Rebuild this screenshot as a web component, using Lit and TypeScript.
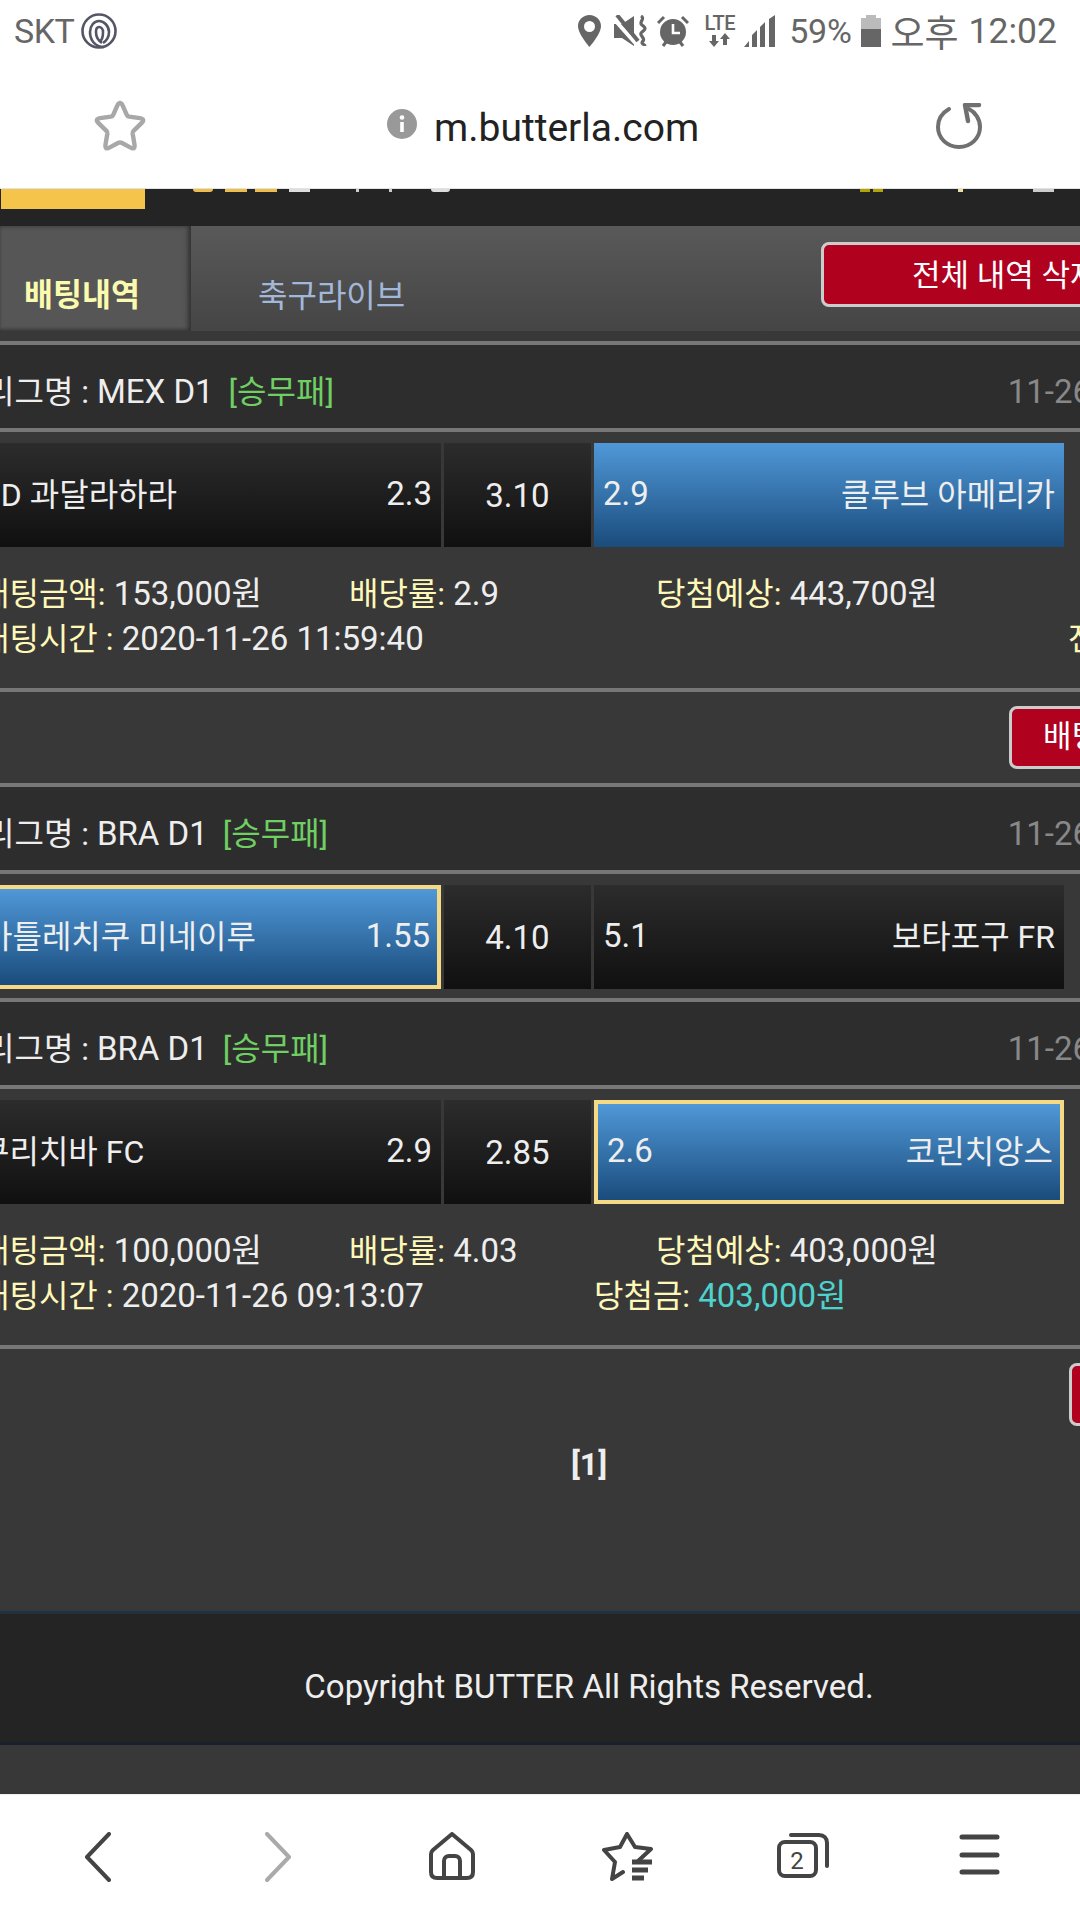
import { LitElement, html, css, svg } from "lit";
import { customElement } from "lit/decorators.js";

interface Cell { left?: string; right?: string; on?: boolean; sel?: boolean; }
interface Section {
  league: string;
  cells: [Cell, Cell, Cell];
  info?: { amount: string; rate: string; expect: string; time: string; win?: string; };
  btnGap?: number;
}

const sections: Section[] = [
  {
    league: "MEX D1",
    cells: [{ left: "CD 과달라하라", right: "2.3" }, { left: "3.10" }, { left: "2.9", right: "클루브 아메리카", on: true }],
    info: { amount: "153,000원", rate: "2.9", expect: "443,700원", time: "2020-11-26 11:59:40" },
    btnGap: 1049,
  },
  {
    league: "BRA D1",
    cells: [{ left: "아틀레치쿠 미네이루", right: "1.55", on: true, sel: true }, { left: "4.10" }, { left: "5.1", right: "보타포구 FR" }],
  },
  {
    league: "BRA D1",
    cells: [{ left: "쿠리치바 FC", right: "2.9" }, { left: "2.85" }, { left: "2.6", right: "코린치앙스", on: true, sel: true }],
    info: { amount: "100,000원", rate: "4.03", expect: "403,000원", time: "2020-11-26 09:13:07", win: "403,000원" },
    btnGap: 1109,
  },
];

const frags = [
  { x: 193, w: 20, c: "#eebd4a", r: 1 }, { x: 225, w: 22, c: "#eebd4a" }, { x: 255, w: 22, c: "#eebd4a" },
  { x: 289, w: 21, c: "#ddd" }, { x: 356, w: 3, c: "#ccc" }, { x: 389, w: 3, c: "#ccc" }, { x: 431, w: 19, c: "#ddd", r: 1 },
  { x: 860, w: 10, c: "#b5a400" }, { x: 873, w: 10, c: "#b5a400" }, { x: 958, w: 5, c: "#eee0a0" }, { x: 1033, w: 21, c: "#ccc" },
];

const icon = (w: number, h: number, body: unknown) =>
  html`<svg width=${w} height=${h} viewBox="0 0 ${w} ${h}" fill="none">${body}</svg>`;

const isNum = (t?: string) => !!t && /^[\d.]+$/.test(t);

@customElement("app-root")
export class AppRoot extends LitElement {
  static styles = css`
    :host {
      display: flex; flex-direction: column; width: 1080px; height: 1920px; overflow: hidden;
      background: #383838; font-family: Roboto, "Noto Sans CJK KR", sans-serif; color: #eee; font-size: 32px;
    }
    .chrome { flex: none; height: 188px; background: #fff; display: flex; flex-direction: column; border-bottom: 1px solid #dde3e6; }
    .status { height: 62px; flex: none; display: flex; align-items: center; color: #666; font-size: 34px; padding-left: 14px; }
    .status svg { flex: none; display: block; }
    .skt { letter-spacing: -.5px; margin-right: 6px; }
    .right { margin-left: auto; display: flex; align-items: center; padding-right: 23px; }
    .lte { display: flex; flex-direction: column; align-items: center; font-size: 20px; line-height: 18px; font-weight: 500; letter-spacing: -.5px; width: 33px; margin-left: 14px; }
    .pct { margin-left: 13px; letter-spacing: -.3px; }
    .ampm { margin-left: 10px; font-size: 37px; line-height: 40px; margin-top: 7px; }
    .clock { margin-left: 10px; font-size: 35.5px; }
    .addr { flex: 1; display: flex; align-items: center; padding-top: 6px; }
    .star { margin-left: 95px; display: block; margin-top: -4px; }
    .star svg { overflow: visible; display: block; }
    .i { margin-left: 242px; display: block; }
    .url { margin-left: 17px; font-size: 39px; color: #222; line-height: 44px; }
    .reload { margin-left: 237px; display: block; margin-top: 4px; }

    .top { flex: none; height: 37px; background: #242424; display: flex; align-items: flex-start; overflow: hidden; padding-left: 1px; }
    .logo { flex: none; width: 144px; height: 20px; background: #f4c44b; }
    .frag { position: absolute; top: 189px; height: 3px; }

    .tabs { flex: none; height: 105px; display: flex; background: linear-gradient(#595959, #454545); }
    .tab { flex: none; height: 100%; box-sizing: border-box; padding-top: 50px; line-height: 40px; font-size: 32px; }
    .tab.on { width: 191px; padding-left: 24px; color: #fbfbb0; font-weight: 700; font-size: 31.5px; background: #565656; box-shadow: inset -3px 0 4px #333, inset 0 -2px 3px #444; }
    .tab.off { width: 630px; padding-left: 67px; color: #a3b8d8; }
    .del {
      flex: none; box-sizing: border-box; height: 63px; border: 3px solid #ccc; border-radius: 8px; background: #b0021f;
      color: #fff; font-size: 31px; line-height: 56px; white-space: nowrap;
    }
    .tabs .del { width: 372px; height: 65px; margin-top: 16px; padding-left: 88px; line-height: 62px; }

    .shift { flex: none; width: 1258px; margin-left: -40px; padding-top: 10px; }
    .league {
      height: 83px; box-sizing: content-box; background: #2d2d2d; border-top: 4px solid #777; border-bottom: 4px solid #777;
      display: flex; align-items: center; padding-left: 25px; padding-top: 0; font-size: 32px; line-height: 40px;
    }
    .league > span { position: relative; top: 5px; }
    .num { font-size: 33px; }
    .kind { color: #6fcf62; margin-left: 15px; }
    .date { color: #888; margin-left: auto; margin-right: 127px; font-size: 33px; }
    .bets { display: grid; grid-template-columns: 481px 147px 470px; gap: 3px; padding-top: 11px; height: 104px; }
    .cell {
      box-sizing: border-box; height: 104px; display: flex; justify-content: space-between; align-items: center;
      background: linear-gradient(#2c2c2c, #101010); padding: 0 9px 4px 9px; white-space: nowrap; font-size: 32px;
    }
    .cell:first-child { padding-left: 20px; }
    .cell.mid { justify-content: center; padding: 0; }
    .cell.on { background: linear-gradient(#5098d8, #1a4c7c); }
    .cell.sel { border: 4px solid #f6d984; padding-left: 9px; padding-right: 7px; }
    .cell:first-child.sel { padding-left: 19px; padding-right: 7px; }
    .name { margin-bottom: 3px; }
    .info { padding: 25px 0 27px 20px; line-height: 44.5px; font-size: 33px; white-space: nowrap; }
    .row { display: flex; }
    .lab { color: #fff8b8; font-size: 32px; }
    .c1 { width: 369px; flex: none; }
    .c2 { width: 307px; flex: none; }
    .c1b { width: 614px; flex: none; }
    .c2b { width: 474px; flex: none; }
    .win { color: #4ed2cd; }
    .rule { height: 4px; background: #777; }
    .gap { height: 9px; }
    .btnrow { height: 91px; box-sizing: border-box; padding-top: 14px; display: flex; }
    .btnrow .del { width: 300px; padding-left: 31px; }
    .pager { height: 171px; display: flex; justify-content: center; align-items: flex-start; padding-top: 3px; box-sizing: border-box; line-height: 42px; font-weight: 700; font-size: 32px; }
    .foot {
      box-sizing: border-box; height: 134px; padding-top: 17px; background: #242424; border-top: 3px solid #1f3040; border-bottom: 3px solid #18212a;
      display: flex; justify-content: center; align-items: center; font-size: 33px; color: #eee;
    }
    .nav { flex: none; margin-top: auto; height: 126px; box-sizing: border-box; background: #fff; border-top: 1px solid #eee; display: flex; align-items: flex-start; padding-top: 37px; }
    .nav svg { flex: none; display: block; }
    .sp { display: block; flex: none; }
  `;

  private renderCell(c: Cell, i: number) {
    const cls = ["cell", i === 1 ? "mid" : "", c.on ? "on" : "", c.sel ? "sel" : ""].join(" ");
    return html`<div class=${cls}>
      <span class=${isNum(c.left) ? "num" : "name"}>${c.left}</span>
      ${c.right ? html`<span class=${isNum(c.right) ? "num" : "name"}>${c.right}</span>` : ""}
    </div>`;
  }

  private renderSection(s: Section) {
    return html`
      <div class="league">
        <span>리그명 : <span class="num">${s.league}</span></span><span class="kind">[승무패]</span><span class="date">11-26</span>
      </div>
      <div class="bets">${s.cells.map((c, i) => this.renderCell(c, i))}</div>
      ${s.info
        ? html`<div class="info">
              <div class="row">
                <span class="c1"><span class="lab">배팅금액:</span> ${s.info.amount}</span>
                <span class="c2"><span class="lab">배당률:</span> ${s.info.rate}</span>
                <span><span class="lab">당첨예상:</span> ${s.info.expect}</span>
              </div>
              <div class="row">
                <span class="c1b"><span class="lab">배팅시간 :</span> ${s.info.time}</span>
                <span class="c2b">${s.info.win ? html`<span class="lab">당첨금:</span> <span class="win">${s.info.win}</span>` : ""}</span>
                ${s.info.win ? "" : html`<span class="lab">전</span>`}
              </div>
            </div>
            <div class="rule"></div>
            <div class="btnrow" style="padding-left:${s.btnGap}px"><div class="del">배팅내역 삭제</div></div>`
        : html`<div class="gap"></div>`}
    `;
  }

  render() {
    return html`
      <div class="chrome">
        <div class="status">
          <span class="skt">SKT</span>
          ${icon(38, 38, svg`<g stroke="#555566" stroke-width="2.6"><circle cx="19" cy="19" r="16.5"/><path d="M24 35c-9 0-14-7-14-15 0-6 4-11 9-11s10 5 10 11c0 6-3 9-6 11"/><path d="M22 31c-3-2-6-6-6-11 0-3 1-5 3-5s4 2 4 5c0 5-1 8-3 9"/></g>`)}
          <div class="right">
            ${icon(23, 32, svg`<path fill-rule="evenodd" fill="#666" d="M11.5 0C5 0 0 5 0 11c0 8 11.5 21 11.5 21S23 19 23 11C23 5 18 0 11.5 0zm0 6a5.5 5.5 0 1 1 0 11 5.5 5.5 0 0 1 0-11z"/>`)}
            <span class="sp" style="width:13px"></span>
            ${icon(33, 32, svg`<path fill="#666" d="M0 9h8l12-8v30L8 23H0z"/><path stroke="#fff" stroke-width="4" d="M-1 3l25 28"/><path stroke="#666" stroke-width="4" d="M3 0l21 26"/><path stroke="#666" stroke-width="3.2" d="M27 1c5 3-3 6 1 9s4 4 0 7 4 6 1 9 2 3 2 5"/>`)}
            <span class="sp" style="width:10px"></span>
            ${icon(32, 32, svg`<circle cx="16" cy="17" r="13" fill="#666"/><path stroke="#fff" stroke-width="2.6" d="M16 9v9h7"/><path stroke="#666" stroke-width="3" d="M1 8l6-6M31 8l-6-6M6 31l3-4M26 31l-3-4"/>`)}
            <div class="lte">LTE
              ${icon(26, 16, svg`<path fill="#666" d="M7 15l-5-6h3V3h4v6h3zM18 1l5 6h-3v6h-4V7h-3z"/>`)}
            </div>
            <span class="sp" style="width:8px"></span>
            ${icon(32, 32, svg`<path fill="#666" d="M0 32l5-6v6zM8 32V20l5-5v17zM16 32V12l5-5v25zM25 32V4l6-4v32z"/>`)}
            <span class="pct">59%</span>
            <span class="sp" style="width:9px"></span>
            ${icon(20, 32, svg`<path fill="#bbb" d="M0 3h5V0h10v3h5v13H0z"/><rect y="14" width="20" height="18" fill="#666"/>`)}
            <span class="ampm">오후</span>
            <span class="clock">12:02</span>
          </div>
        </div>
        <div class="addr">
          <span class="star">${icon(50, 48, svg`<path transform="translate(25 25) scale(1.13) translate(-25 -25)" stroke="#a8a8a8" stroke-width="3.9" stroke-linejoin="round" d="M22.6 6Q25 1.6 27.4 6L31 14.2Q31.6 15.6 33 15.8L42.6 17.2Q47.6 18 44 21.6L37 28.4Q36 29.4 36.2 30.8L37.8 40.4Q38.6 45.6 34 43L26.4 39Q25 38.3 23.6 39L16 43Q11.4 45.6 12.2 40.4L13.8 30.8Q14 29.4 13 28.4L6 21.6Q2.4 18 7.4 17.2L17 15.8Q18.4 15.6 19 14.2Z"/>`)}</span>
          <span class="i">${icon(30, 30, svg`<circle cx="15" cy="15" r="15" fill="#999"/><circle cx="15" cy="8.5" r="2.3" fill="#fff"/><path stroke="#fff" stroke-width="3.6" d="M15 13v10"/>`)}</span>
          <span class="url">m.butterla.com</span>
          <span class="reload">${icon(46, 46, svg`<path stroke="#707070" stroke-width="4" stroke-linecap="round" d="M13 6C6 10 2 16 2 24c0 11 9 20 21 20s21-9 21-20c0-8-5-15-11-18"/><path stroke="#707070" stroke-width="4.4" stroke-linecap="round" stroke-linejoin="round" d="M43 2H29l3 16"/>`)}</span>
        </div>
      </div>
      <div class="top">
        <div class="logo"></div>
        ${frags.map((f) => html`<div class="frag" style="left:${f.x}px;width:${f.w}px;background:${f.c};border-radius:${f.r ? "0 0 10px 10px" : "0"}"></div>`)}
      </div>
      <div class="tabs">
        <div class="tab on">배팅내역</div>
        <div class="tab off">축구라이브</div>
        <div class="del">전체 내역 삭제</div>
      </div>
      <div class="shift">
        ${sections.map((s) => this.renderSection(s))}
        <div class="pager">[1]</div>
        <div class="foot">Copyright BUTTER All Rights Reserved.</div>
      </div>
      <div class="nav">
        <span class="sp" style="width:85px"></span>
        ${icon(26, 50, svg`<path stroke="#444" stroke-width="4" stroke-linecap="round" stroke-linejoin="round" d="M24 2L2 25l22 23"/>`)}
        <span class="sp" style="width:154px"></span>
        ${icon(26, 50, svg`<path stroke="#aaa" stroke-width="4" stroke-linecap="round" stroke-linejoin="round" d="M2 2l22 23L2 48"/>`)}
        <span class="sp" style="width:138px"></span>
        ${icon(46, 48, svg`<path stroke="#444" stroke-width="4" stroke-linejoin="round" d="M23 2L4 18c-1 1-2 2-2 4v18c0 4 2 6 6 6h30c4 0 6-2 6-6V22c0-2-1-3-2-4z"/><path stroke="#444" stroke-width="4" stroke-linejoin="round" d="M15 46V29c0-3 2-5 5-5h6c3 0 5 2 5 5v17"/>`)}
        <span class="sp" style="width:127px"></span>
        ${icon(52, 50, svg`<path stroke="#444" stroke-width="4" stroke-linejoin="round" stroke-linecap="round" d="M35 30l14-13-16-2-8-13-7 13-16 3 11 12-3 17 11-7"/><path stroke="#444" stroke-width="5" d="M30 30h20M30 38h16M30 46h12"/>`)}
        <span class="sp" style="width:123px"></span>
        ${icon(52, 46, svg`<rect x="2" y="10" width="37" height="34" rx="6" stroke="#444" stroke-width="4"/><path stroke="#444" stroke-width="4" stroke-linecap="round" d="M14 3h28c5 0 8 3 8 8v23"/><text x="20" y="37" text-anchor="middle" font-size="24" fill="#444" font-family="Roboto">2</text>`)}
        <span class="sp" style="width:130px"></span>
        ${icon(41, 44, svg`<path stroke="#444" stroke-width="5" stroke-linecap="round" d="M3 5h35M3 23h35M3 40h35"/>`)}
      </div>
    `;
  }
}
